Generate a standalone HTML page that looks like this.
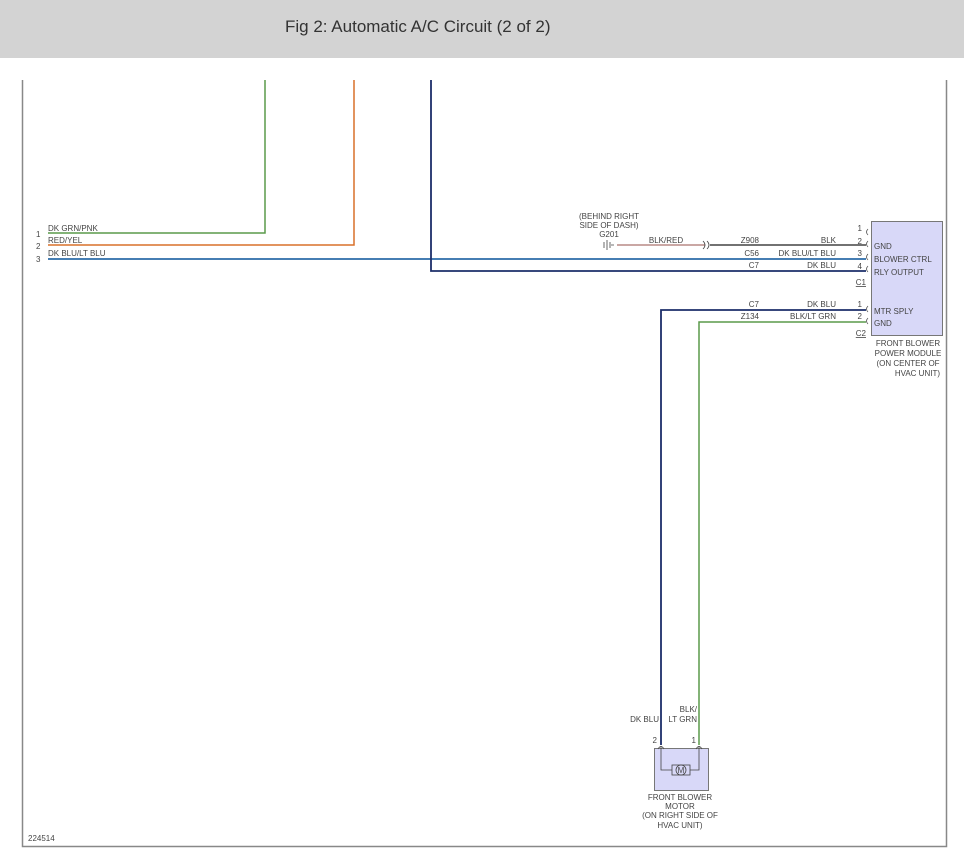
<!DOCTYPE html>
<html><head><meta charset="utf-8"><style>
html,body{margin:0;padding:0;background:#fff;width:964px;height:854px;overflow:hidden}
.hdr{position:absolute;left:0;top:0;width:964px;height:58px;background:#d3d3d3}
.hdr span{position:absolute;left:285px;top:17px;font-family:"Liberation Sans",sans-serif;font-size:17px;color:#333}
svg{position:absolute;left:0;top:0}
text{font-family:"Liberation Sans",sans-serif;font-size:8px;fill:#444}
</style></head><body>
<div class="hdr"><span>Fig 2: Automatic A/C Circuit (2 of 2)</span></div>
<svg width="964" height="854" viewBox="0 0 964 854">
<path d="M22.5 80V846.5H946.5V80" fill="none" stroke="#888" stroke-width="1.5"/>
<!-- wires -->
<path d="M265 80V233H48" fill="none" stroke="#5a9a4a" stroke-width="1.5"/>
<path d="M354 80V245H48" fill="none" stroke="#d9702a" stroke-width="1.5"/>
<path d="M48 259H866" fill="none" stroke="#2b6ca8" stroke-width="1.8"/>
<path d="M431 80V271H866" fill="none" stroke="#1c2e6a" stroke-width="1.8"/>
<path d="M617 245H705" fill="none" stroke="#b98a86" stroke-width="1.5"/>
<path d="M710 245H866" fill="none" stroke="#444" stroke-width="1.5"/>
<path d="M703 241q4 4 0 8M707 241q4 4 0 8" fill="none" stroke="#444" stroke-width="0.8"/>
<path d="M604 242v6M607 240v10M610 242v6M611 245h3" stroke="#444" stroke-width="0.8"/>
<path d="M661 745V310H866" fill="none" stroke="#1c2e6a" stroke-width="1.8"/>
<path d="M699 745V322H866" fill="none" stroke="#5a9a4a" stroke-width="1.5"/>
<!-- connector hooks -->
<g fill="none" stroke="#555" stroke-width="0.8">
<path d="M868 229q-3 3 0 6M868 241q-3 3 0 6M868 254q-3 3 0 6M868 266q-3 3 0 6M868 306q-3 3 0 6M868 318q-3 3 0 6"/>
</g>
<rect x="871.5" y="221.5" width="71" height="114" fill="#d8d8f8" stroke="#777"/>
<text x="874" y="249">GND</text>
<text x="874" y="262">BLOWER CTRL</text>
<text x="874" y="275">RLY OUTPUT</text>
<text x="874" y="314">MTR SPLY</text>
<text x="874" y="326">GND</text>
<text x="862" y="231" text-anchor="end">1</text>
<text x="862" y="244" text-anchor="end">2</text>
<text x="862" y="256" text-anchor="end">3</text>
<text x="862" y="269" text-anchor="end">4</text>
<text x="866" y="285" text-anchor="end" text-decoration="underline">C1</text>
<text x="862" y="307" text-anchor="end">1</text>
<text x="862" y="319" text-anchor="end">2</text>
<text x="866" y="336" text-anchor="end" text-decoration="underline">C2</text>
<text x="908" y="346" text-anchor="middle">FRONT BLOWER</text>
<text x="908" y="356" text-anchor="middle">POWER MODULE</text>
<text x="908" y="366" text-anchor="middle">(ON CENTER OF</text>
<text x="940" y="376" text-anchor="end">HVAC UNIT)</text>
<text x="836" y="243" text-anchor="end">BLK</text>
<text x="836" y="256" text-anchor="end">DK BLU/LT BLU</text>
<text x="836" y="268" text-anchor="end">DK BLU</text>
<text x="759" y="243" text-anchor="end">Z908</text>
<text x="759" y="256" text-anchor="end">C56</text>
<text x="759" y="268" text-anchor="end">C7</text>
<text x="759" y="307" text-anchor="end">C7</text>
<text x="759" y="319" text-anchor="end">Z134</text>
<text x="836" y="307" text-anchor="end">DK BLU</text>
<text x="836" y="319" text-anchor="end">BLK/LT GRN</text>
<text x="666" y="243" text-anchor="middle">BLK/RED</text>
<text x="609" y="219" text-anchor="middle">(BEHIND RIGHT</text>
<text x="609" y="228" text-anchor="middle">SIDE OF DASH)</text>
<text x="609" y="237" text-anchor="middle">G201</text>
<text x="48" y="231">DK GRN/PNK</text>
<text x="48" y="243">RED/YEL</text>
<text x="48" y="256">DK BLU/LT BLU</text>
<text x="36" y="237">1</text>
<text x="36" y="249">2</text>
<text x="36" y="262">3</text>
<!-- motor -->
<text x="659" y="722" text-anchor="end">DK BLU</text>
<text x="697" y="712" text-anchor="end">BLK/</text>
<text x="697" y="722" text-anchor="end">LT GRN</text>
<text x="657" y="743" text-anchor="end">2</text>
<text x="696" y="743" text-anchor="end">1</text>
<rect x="654.5" y="748.5" width="54" height="42" fill="#d8d8f8" stroke="#777"/>
<g fill="none" stroke="#444" stroke-width="0.8">
<path d="M658 749q3-5 6 0M696 749q3-5 6 0"/>
<path d="M661 746V770H672M690 770H699V746"/>
<rect x="672" y="765" width="18" height="10"/>
<circle cx="681" cy="770" r="5"/>
</g>
<text x="681" y="773" text-anchor="middle" font-size="7">M</text>
<text x="680" y="800" text-anchor="middle">FRONT BLOWER</text>
<text x="680" y="809" text-anchor="middle">MOTOR</text>
<text x="680" y="818" text-anchor="middle">(ON RIGHT SIDE OF</text>
<text x="680" y="828" text-anchor="middle">HVAC UNIT)</text>
<text x="28" y="841" font-size="7">224514</text>
</svg>
</body></html>
